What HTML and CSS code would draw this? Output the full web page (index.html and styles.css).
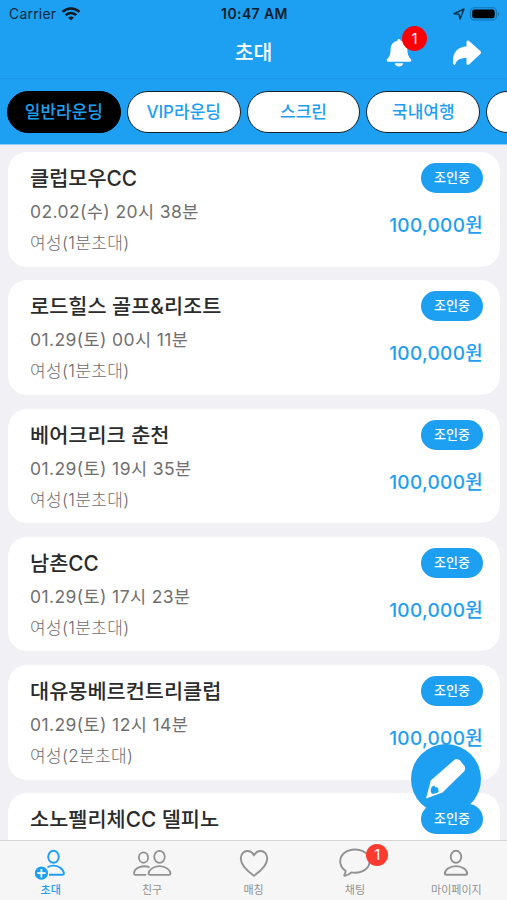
FILE: index.html
```
<!DOCTYPE html>
<html lang="ko">
<head>
    <meta charset="UTF-8">
    <meta name="viewport" content="width=device-width, initial-scale=1.0">
    <title>초대</title>
    <link rel="stylesheet" href="styles.css">
</head>
<body>
    <header class="header">
        <div class="status">
            <div class="carrier">
                <span>Carrier</span>
                <svg width="20" height="14" viewBox="0 0 20 14" fill="none" stroke="#10161c" stroke-width="2.6">
                    <path d="M1.6 4.9C6.3.3 13.7.3 18.4 4.9M4.7 8.1c3-2.9 7.6-2.9 10.6 0"/>
                    <path d="M10 13.5 7.1 10.6c1.6-1.5 4.2-1.5 5.8 0z" fill="#10161c" stroke="none"/>
                </svg>
            </div>
            <div class="time">10:47 AM</div>
            <div class="power">
                <svg width="12" height="12" viewBox="0 0 12 12" fill="none" stroke="#10344e" stroke-width="1.5" stroke-linejoin="round">
                    <path d="M11 1 7 11 6 6.3 1 5.8z"/>
                </svg>
                <svg width="30" height="14" viewBox="0 0 30 14">
                    <rect x=".6" y=".8" width="25.8" height="12.2" rx="3.8" fill="none" stroke="#1272ae" stroke-width="1.1"/>
                    <rect x="2.2" y="2.5" width="22.5" height="8.8" rx="2.2" fill="#000"/>
                    <path d="M27.8 5v4c1.8-.7 1.8-3.3 0-4z" fill="#1272ae"/>
                </svg>
            </div>
        </div>
        <div class="navbar">
            <h1>초대</h1>
            <div class="actions">
                <div class="bell">
                    <svg width="26" height="28" viewBox="0 0 26 28" fill="#fff">
                        <path d="M13 0c1 0 1.7.7 1.7 1.8 4.1.8 6.7 4.1 6.7 8.5 0 5.4 1.2 7.3 3.4 9.7 1 1.2.3 2.8-1.2 2.8H2.400C.9 22.800.2 21.200 1.200 20c2.200-2.400 3.400-4.300 3.400-9.700 0-4.400 2.600-7.700 6.700-8.500C11.300.7 12 0 13 0zM9 24.200h8c0 4.300-8 4.300-8 0z"/>
                    </svg>
                    <span class="count">1</span>
                </div>
                <svg width="30" height="26" viewBox="0 0 30 26" fill="#fff">
                    <path d="M14.5 2v4.400C6 6.800 1 11.800 1 20.500c0 1.600.2 3.100.6 4 .3.700 1.300.6 1.600-.1 1.500-4.600 5-6.200 11.300-6.300v5.300c0 1.400 1.600 1.900 2.600 1l11.200-10.300c1-.9 1-2.100 0-3L17.100 1c-1-.9-2.600-.4-2.600 1z"/>
                </svg>
            </div>
        </div>
        <nav class="tabs">
            <button class="tab selected">일반라운딩</button>
            <button class="tab">VIP라운딩</button>
            <button class="tab">스크린</button>
            <button class="tab">국내여행</button>
            <button class="tab"></button>
        </nav>
    </header>

    <main class="list">
        <div class="card">
            <div class="info">
                <h2>클럽모우CC</h2>
                <p class="date">02.02(수) 20시 38분</p>
                <p class="invite">여성(1분초대)</p>
            </div>
            <div class="side">
                <span class="state">조인중</span>
                <span class="price">100,000원</span>
            </div>
        </div>
        <div class="card">
            <div class="info">
                <h2>로드힐스 골프&amp;리조트</h2>
                <p class="date">01.29(토) 00시 11분</p>
                <p class="invite">여성(1분초대)</p>
            </div>
            <div class="side">
                <span class="state">조인중</span>
                <span class="price">100,000원</span>
            </div>
        </div>
        <div class="card">
            <div class="info">
                <h2>베어크리크 춘천</h2>
                <p class="date">01.29(토) 19시 35분</p>
                <p class="invite">여성(1분초대)</p>
            </div>
            <div class="side">
                <span class="state">조인중</span>
                <span class="price">100,000원</span>
            </div>
        </div>
        <div class="card">
            <div class="info">
                <h2>남촌CC</h2>
                <p class="date">01.29(토) 17시 23분</p>
                <p class="invite">여성(1분초대)</p>
            </div>
            <div class="side">
                <span class="state">조인중</span>
                <span class="price">100,000원</span>
            </div>
        </div>
        <div class="card">
            <div class="info">
                <h2>대유몽베르컨트리클럽</h2>
                <p class="date">01.29(토) 12시 14분</p>
                <p class="invite">여성(2분초대)</p>
            </div>
            <div class="side">
                <span class="state">조인중</span>
                <span class="price">100,000원</span>
            </div>
        </div>
        <div class="card">
            <div class="info">
                <h2>소노펠리체CC 델피노</h2>
            </div>
            <div class="side">
                <span class="state">조인중</span>
            </div>
        </div>

        <button class="write" aria-label="글쓰기">
            <svg width="70" height="70" viewBox="0 0 70 70">
                <path d="M15 54.500 19.800 36.500 43.800 15.500Q46.500 14 49 16.500L53.500 22Q55 25 53 27.500L31.500 48.500z" fill="#fff"/>
                <path d="M20.500 43.500c1.500-2 3-2.300 3.800-.2 2.200-.4 3.600.8 3 2.700 1 1 .4 2.300-1.300 2.900l-5 1c-1.700-2-1.700-4.400-.5-6.400z" fill="#1da0f2"/>
            </svg>
        </button>
    </main>

    <footer class="menu">
        <a class="item active">
            <svg width="32" height="32" viewBox="0 0 32 32" fill="none" stroke="#1da0f2" stroke-width="1.9">
                <ellipse cx="18.500" cy="8.800" rx="5.300" ry="6"/>
                <path d="M12.500 19.200c4-2.400 9.500-2 12.700.6 2.300 1.800 3.700 4.200 3.700 5.700 0 .9-.6 1.300-1.700 1.300H14"/>
                <circle cx="6.400" cy="25.200" r="6.600" fill="#1da0f2" stroke="none"/>
                <path d="M6.400 21v8.400M2.200 25.200h8.400" stroke="#fff" stroke-width="1.700"/>
            </svg>
            <span>초대</span>
        </a>
        <a class="item">
            <svg width="40" height="32" viewBox="0 0 40 32" fill="none" stroke="#929292" stroke-width="1.800">
                <ellipse cx="11.500" cy="9.600" rx="4.600" ry="5.200"/>
                <ellipse cx="27.500" cy="8.800" rx="5.300" ry="6"/>
                <path d="M17.500 19.400C11.500 16.600 2 19.500 2 25.500c0 .9.500 1.300 1.400 1.300h10.800"/>
                <path d="M18.300 26.800c-1.300 0-1.800-.5-1.800-1.300 0-3.200 4.700-7.400 11-7.400s11 4.200 11 7.400c0 .8-.5 1.300-1.800 1.300z"/>
            </svg>
            <span>친구</span>
        </a>
        <a class="item">
            <svg width="32" height="32" viewBox="0 0 32 32" fill="none" stroke="#929292" stroke-width="1.900">
                <path d="M16 27.700C10.500 24 2.800 17.500 2.800 10.600c0-4.500 2.800-7.600 6.600-7.600 3 0 5.200 1.600 6.600 4.400C17.400 4.600 19.600 3 22.600 3c3.800 0 6.600 3.100 6.600 7.600 0 6.900-7.700 13.400-13.200 17.100z" stroke-linejoin="round"/>
            </svg>
            <span>매칭</span>
        </a>
        <a class="item">
            <svg width="32" height="32" viewBox="0 0 32 32" fill="none" stroke="#929292" stroke-width="1.900" stroke-linejoin="round">
                <path d="M16 1.500c8.300 0 14.600 5 14.600 11.700S24.300 24.700 16 24.700c-1.400 0-2.500-.1-3.600-.3-2 1.900-4.300 3-6.400 3.300-.7.100-1-.5-.6-1.100.9-1.300 1.300-2.600 1.200-3.900C3 20.500 1.200 17.300 1.200 13.200 1.200 6.500 7.700 1.500 16 1.500z"/>
            </svg>
            <span>채팅</span>
            <span class="count">1</span>
        </a>
        <a class="item">
            <svg width="32" height="32" viewBox="0 0 32 32" fill="none" stroke="#929292" stroke-width="1.900">
                <ellipse cx="16" cy="8.800" rx="5.300" ry="6"/>
                <path d="M6.600 26.800c-1.300 0-1.800-.5-1.800-1.300 0-3.200 4.700-7.400 11.200-7.400s11.200 4.200 11.200 7.400c0 .8-.5 1.300-1.800 1.300z"/>
            </svg>
            <span>마이페이지</span>
        </a>
    </footer>
</body>
</html>
```
FILE: styles.css
```
* {
    box-sizing: border-box;
}
body {
    margin: 0;
    width: 507px;
    height: 900px;
    display: flex;
    flex-direction: column;
    overflow: hidden;
    font-family: Inter, "Noto Sans CJK KR", sans-serif;
    background-color: #f0f0f5;
}
h1, h2, p {
    margin: 0;
}
button {
    padding: 0;
    border: none;
    font-family: inherit;
}
.header {
    height: 145px;
    flex-shrink: 0;
    background-color: #1da0f2;
    border-bottom: 1px solid #8fd0fa;
}
.status {
    height: 27px;
    display: grid;
    grid-template-columns: 1fr auto 1fr;
    align-items: center;
    padding: 0 7px 0 9px;
    font-size: 14px;
    letter-spacing: 0.2px;
    color: #10283a;
}
.carrier, .power {
    display: flex;
    align-items: center;
    gap: 5px;
}
.power {
    justify-content: flex-end;
}
.time {
    font-weight: 600;
    letter-spacing: 0.4px;
    color: #0c1c28;
}
.navbar {
    height: 52px;
    position: relative;
    display: flex;
    align-items: center;
    justify-content: center;
    border-bottom: 1px solid #1b97e6;
}
.navbar h1 {
    font-size: 20.5px;
    line-height: 30px;
    font-weight: 500;
    color: #fff;
}
.actions {
    position: absolute;
    right: 25px;
    top: 11.5px;
    display: flex;
    align-items: center;
    gap: 40px;
}
.bell {
    position: relative;
    height: 28px;
}
.count {
    position: absolute;
    border-radius: 50%;
    text-align: center;
    color: #fff;
}
.bell .count {
    left: 16px;
    top: -13px;
    width: 25px;
    height: 25px;
    line-height: 25px;
    font-size: 14px;
    background-color: #fb0007;
}
.tabs {
    display: flex;
    gap: 6px;
    padding: 12px 0 0 7px;
    overflow: hidden;
}
.tab {
    width: 113.8px;
    height: 42px;
    flex-shrink: 0;
    padding-bottom: 3px;
    border: 1.5px solid #17222b;
    border-radius: 21px;
    background-color: #fff;
    color: #1da0f2;
    font-size: 17px;
    font-weight: 500;
}
.tab.selected {
    background-color: #000;
    border-color: #000;
}
.list {
    flex: 1;
    min-height: 0;
    position: relative;
    overflow: hidden;
    display: flex;
    flex-direction: column;
    gap: 13.8px;
    padding: 7px 7px 0 8px;
}
.card {
    height: 114.5px;
    flex-shrink: 0;
    display: flex;
    justify-content: space-between;
    padding: 10px 17px 0 22px;
    border-radius: 19px;
    background-color: #fff;
}
.card h2 {
    font-size: 20.8px;
    line-height: 34px;
    font-weight: 500;
    color: #2b2b2b;
}
.date {
    font-size: 17.5px;
    line-height: 31px;
    letter-spacing: 0.4px;
    color: #707070;
}
.invite {
    font-size: 17px;
    line-height: 32px;
    letter-spacing: 0.35px;
    font-weight: 300;
    color: #6c6c6c;
}
.side {
    display: flex;
    flex-direction: column;
    align-items: flex-end;
    gap: 19px;
    padding-top: 1px;
}
.state {
    position: relative;
    z-index: 2;
    width: 62px;
    height: 30px;
    line-height: 28px;
    border-radius: 15px;
    text-align: center;
    font-size: 13px;
    font-weight: 500;
    color: #fff;
    background-color: #1da0f2;
}
.price {
    font-size: 19px;
    line-height: 28px;
    letter-spacing: 0.3px;
    font-weight: 500;
    color: #1da0f2;
}
.write {
    position: absolute;
    z-index: 1;
    right: 26px;
    bottom: 26px;
    width: 70px;
    height: 70px;
    border-radius: 50%;
    background-color: #1da0f2;
}
.write svg {
    display: block;
}
.menu {
    height: 60px;
    flex-shrink: 0;
    display: flex;
    border-top: 1px solid #d5d5d7;
    background-color: #f6f6f6;
}
.item {
    position: relative;
    flex: 1;
    display: flex;
    flex-direction: column;
    align-items: center;
    padding-top: 7px;
    font-size: 11px;
    line-height: 20px;
    color: #929292;
}
.item svg {
    flex-shrink: 0;
}
.item.active {
    color: #1da0f2;
    font-weight: 500;
}
.item .count {
    left: 62px;
    top: 3px;
    width: 22px;
    height: 22px;
    line-height: 22px;
    font-size: 15px;
    background-color: #fb3b30;
}
```
